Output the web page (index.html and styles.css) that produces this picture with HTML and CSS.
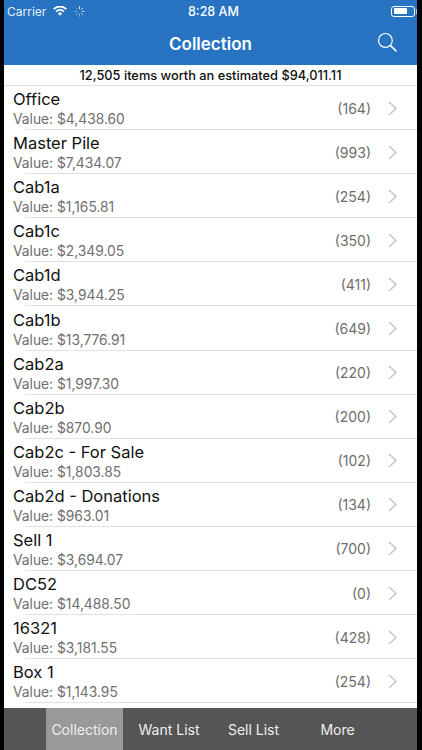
FILE: index.html
```html
<!DOCTYPE html>
<html lang="en">
<head>
<meta charset="utf-8">
<title>Collection</title>
<link rel="stylesheet" href="styles.css">
</head>
<body>
<div class="screen">
  <header class="top">
    <div class="status">
      <div class="status-left">
        <span>Carrier</span>
        <svg class="wifi" viewBox="0 0 14 10" width="14" height="10"><path d="M7 9.8 4.8 7.4a3.1 3.1 0 0 1 4.4 0zM3.6 6.2 2.4 4.9a6.6 6.6 0 0 1 9.2 0l-1.2 1.3a4.9 4.9 0 0 0-6.8 0zM1.3 3.8 0 2.5a10 10 0 0 1 14 0l-1.3 1.3a8.2 8.2 0 0 0-11.4 0z" fill="#fff"/></svg>
        <svg class="spin" viewBox="0 0 12 12" width="11" height="11"><g stroke="#fff" stroke-width="1" stroke-linecap="round"><path d="M6 .8v2.4" opacity=".9"/><path d="M9.7 2.3 8 4" opacity=".8"/><path d="M11.2 6H8.8" opacity=".7"/><path d="M9.7 9.7 8 8" opacity=".6"/><path d="M6 11.2V8.8" opacity=".5"/><path d="M2.3 9.7 4 8" opacity=".45"/><path d="M.8 6h2.4" opacity=".4"/><path d="M2.3 2.3 4 4" opacity=".35"/></g></svg>
      </div>
      <span class="time">8:28 AM</span>
      <div class="battery"><span class="battery-fill"></span></div>
    </div>
    <div class="nav">
      <h1 class="title">Collection</h1>
      <svg class="search" viewBox="0 0 20 20" width="20" height="20"><circle cx="8.4" cy="8.4" r="6.9" fill="none" stroke="#fff" stroke-width="1.2"/><path d="M13.4 13.4 19 19" stroke="#fff" stroke-width="1.7" stroke-linecap="round"/></svg>
    </div>
  </header>
  <div class="summary">12,505 items worth an estimated $94,011.11</div>
  <ul class="list">
    <li class="row"><div class="info"><div class="name">Office</div><div class="value">Value: $4,438.60</div></div><span class="count">(164)</span><svg class="chev" viewBox="0 0 9 15" width="9" height="15"><path d="M1 1l7 6.5L1 14" fill="none" stroke="#c4c4c8" stroke-width="1.5"/></svg></li>
    <li class="row"><div class="info"><div class="name">Master Pile</div><div class="value">Value: $7,434.07</div></div><span class="count">(993)</span><svg class="chev" viewBox="0 0 9 15" width="9" height="15"><path d="M1 1l7 6.5L1 14" fill="none" stroke="#c4c4c8" stroke-width="1.5"/></svg></li>
    <li class="row"><div class="info"><div class="name">Cab1a</div><div class="value">Value: $1,165.81</div></div><span class="count">(254)</span><svg class="chev" viewBox="0 0 9 15" width="9" height="15"><path d="M1 1l7 6.5L1 14" fill="none" stroke="#c4c4c8" stroke-width="1.5"/></svg></li>
    <li class="row"><div class="info"><div class="name">Cab1c</div><div class="value">Value: $2,349.05</div></div><span class="count">(350)</span><svg class="chev" viewBox="0 0 9 15" width="9" height="15"><path d="M1 1l7 6.5L1 14" fill="none" stroke="#c4c4c8" stroke-width="1.5"/></svg></li>
    <li class="row"><div class="info"><div class="name">Cab1d</div><div class="value">Value: $3,944.25</div></div><span class="count">(411)</span><svg class="chev" viewBox="0 0 9 15" width="9" height="15"><path d="M1 1l7 6.5L1 14" fill="none" stroke="#c4c4c8" stroke-width="1.5"/></svg></li>
    <li class="row"><div class="info"><div class="name">Cab1b</div><div class="value">Value: $13,776.91</div></div><span class="count">(649)</span><svg class="chev" viewBox="0 0 9 15" width="9" height="15"><path d="M1 1l7 6.5L1 14" fill="none" stroke="#c4c4c8" stroke-width="1.5"/></svg></li>
    <li class="row"><div class="info"><div class="name">Cab2a</div><div class="value">Value: $1,997.30</div></div><span class="count">(220)</span><svg class="chev" viewBox="0 0 9 15" width="9" height="15"><path d="M1 1l7 6.5L1 14" fill="none" stroke="#c4c4c8" stroke-width="1.5"/></svg></li>
    <li class="row"><div class="info"><div class="name">Cab2b</div><div class="value">Value: $870.90</div></div><span class="count">(200)</span><svg class="chev" viewBox="0 0 9 15" width="9" height="15"><path d="M1 1l7 6.5L1 14" fill="none" stroke="#c4c4c8" stroke-width="1.5"/></svg></li>
    <li class="row"><div class="info"><div class="name">Cab2c - For Sale</div><div class="value">Value: $1,803.85</div></div><span class="count">(102)</span><svg class="chev" viewBox="0 0 9 15" width="9" height="15"><path d="M1 1l7 6.5L1 14" fill="none" stroke="#c4c4c8" stroke-width="1.5"/></svg></li>
    <li class="row"><div class="info"><div class="name">Cab2d - Donations</div><div class="value">Value: $963.01</div></div><span class="count">(134)</span><svg class="chev" viewBox="0 0 9 15" width="9" height="15"><path d="M1 1l7 6.5L1 14" fill="none" stroke="#c4c4c8" stroke-width="1.5"/></svg></li>
    <li class="row"><div class="info"><div class="name">Sell 1</div><div class="value">Value: $3,694.07</div></div><span class="count">(700)</span><svg class="chev" viewBox="0 0 9 15" width="9" height="15"><path d="M1 1l7 6.5L1 14" fill="none" stroke="#c4c4c8" stroke-width="1.5"/></svg></li>
    <li class="row"><div class="info"><div class="name">DC52</div><div class="value">Value: $14,488.50</div></div><span class="count">(0)</span><svg class="chev" viewBox="0 0 9 15" width="9" height="15"><path d="M1 1l7 6.5L1 14" fill="none" stroke="#c4c4c8" stroke-width="1.5"/></svg></li>
    <li class="row"><div class="info"><div class="name">16321</div><div class="value">Value: $3,181.55</div></div><span class="count">(428)</span><svg class="chev" viewBox="0 0 9 15" width="9" height="15"><path d="M1 1l7 6.5L1 14" fill="none" stroke="#c4c4c8" stroke-width="1.5"/></svg></li>
    <li class="row"><div class="info"><div class="name">Box 1</div><div class="value">Value: $1,143.95</div></div><span class="count">(254)</span><svg class="chev" viewBox="0 0 9 15" width="9" height="15"><path d="M1 1l7 6.5L1 14" fill="none" stroke="#c4c4c8" stroke-width="1.5"/></svg></li>
  </ul>
  <nav class="tabs">
    <span class="tab active">Collection</span>
    <span class="tab want">Want List</span>
    <span class="tab sell">Sell List</span>
    <span class="tab more">More</span>
  </nav>
</div>
</body>
</html>
```
FILE: styles.css
```css
* { box-sizing: border-box; }
html, body { margin: 0; height: 100%; background: #000; }
body { font-family: Inter, "Liberation Sans", sans-serif; overflow: hidden; }
.screen { width: 413px; height: 750px; margin-left: 4px; background: #fff; display: flex; flex-direction: column; }
.top { background: #2773c2; color: #fff; height: 65px; flex: none; }
.status { height: 22px; display: flex; align-items: center; justify-content: space-between; padding: 0 0 0 3px; font-size: 12.5px; position: relative; }
.status-left { display: flex; align-items: center; gap: 7px; color: #e6eef8; }
.status-left span { font-size: 12px; }
.time { font-weight: 500; position: absolute; left: 184px; }
.battery { width: 24px; height: 11px; border: 1px solid #fff; border-radius: 3px; padding: 1.5px; margin-right: 2px; position: relative; }
.battery::after { content: ""; position: absolute; right: -3px; top: 2px; width: 1px; height: 5px; background: rgba(255, 255, 255, 0.6); }
.battery-fill { display: block; width: 13px; height: 100%; background: #fff; border-radius: 1px; }
.nav { height: 43px; display: flex; align-items: center; justify-content: center; position: relative; }
.title { margin: 0; font-size: 17px; font-weight: 600; }
.search { position: absolute; right: 20px; top: 10px; }
.summary { height: 21px; flex: none; display: flex; align-items: center; justify-content: center; font-size: 12.8px; font-weight: 500; color: #111; border-bottom: 1px solid #e2e2e4; padding-top: 1px; }
.list { list-style: none; margin: 0; padding: 0; flex: 1; min-height: 0; }
.row { height: 44.1px; display: flex; align-items: center; padding-left: 9px; padding-right: 20px; position: relative; }
.row::after { content: ""; position: absolute; left: 21px; right: 0; bottom: 0; height: 1px; background: #e2e2e4; }
.info { flex: 1; min-width: 0; margin-top: 1px; }
.name { font-size: 16.5px; line-height: 21px; color: #111; }
.value { font-size: 13.8px; line-height: 18px; color: #6e6e6e; }
.count { font-size: 14px; color: #6e6e6e; margin-right: 17px; }
.chev { flex: none; }
.tabs { height: 42px; flex: none; background: #555; display: flex; color: #eee; font-size: 14px; }
.tab { display: flex; align-items: center; justify-content: center; }
.active { margin-left: 42px; width: 77px; background: #999; }
.want { width: 92px; }
.sell { width: 77px; }
.more { width: 91px; }
```
